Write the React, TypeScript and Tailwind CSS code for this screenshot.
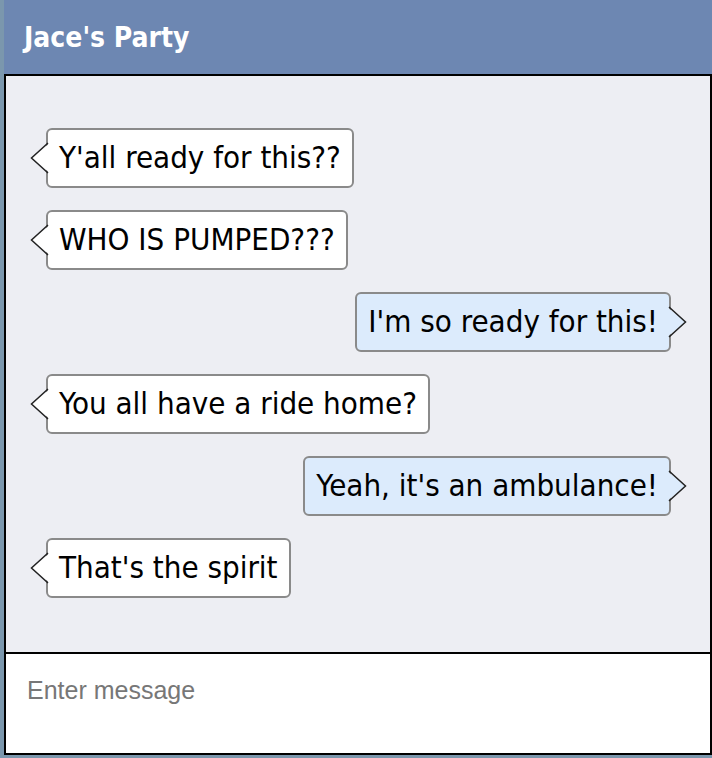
import React from 'react';

type Msg = { id: number; text: string; mine: boolean };

const messages: Msg[] = [
  { id: 1, text: "Y'all ready for this??", mine: false },
  { id: 2, text: 'WHO IS PUMPED???', mine: false },
  { id: 3, text: "I'm so ready for this!", mine: true },
  { id: 4, text: 'You all have a ride home?', mine: false },
  { id: 5, text: "Yeah, it's an ambulance!", mine: true },
  { id: 6, text: "That's the spirit", mine: false },
];

const Tail: React.FC<{ mine: boolean }> = ({ mine }) => (
  <svg
    width="20"
    height="32"
    viewBox="0 0 20 32"
    className={`absolute top-1/2 -translate-y-1/2 ${mine ? '-right-[18px] scale-x-[-1]' : '-left-[18px]'}`}
  >
    <polygon points="20,1 1.5,16 20,31" fill={mine ? '#dcebfc' : '#ffffff'} />
    <polyline points="18,1 1.5,16 18,31" fill="none" stroke="#222222" strokeWidth="1.5" />
  </svg>
);

const Bubble: React.FC<{ msg: Msg }> = ({ msg }) => (
  <div className={`flex ${msg.mine ? 'justify-end' : 'justify-start'}`}>
    <div
      className={`relative h-[60px] flex items-center px-[11px] pb-[2px] rounded-md border-2 border-[#8a8a8a] text-[31px] text-black ${
        msg.mine ? 'bg-[#dcebfc]' : 'bg-white'
      }`}
      style={{ fontFamily: '"DejaVu Sans Condensed", "DejaVu Sans", sans-serif' }}
    >
      <Tail mine={msg.mine} />
      <span className="relative">{msg.text}</span>
    </div>
  </div>
);

export default function App() {
  return (
    <div className="w-[712px] h-[758px] bg-[#7b97ad] pl-1 pb-[3px] overflow-hidden">
      <div className="flex flex-col h-full">
        <header className="h-[74px] bg-[#6d87b2] flex items-center px-5 pt-[2px] shrink-0">
          <h1
            className="text-white font-bold text-[28px]"
            style={{ fontFamily: '"DejaVu Sans Condensed", "DejaVu Sans", sans-serif' }}
          >
            Jace's Party
          </h1>
        </header>

        <div className="flex-1 flex flex-col border-2 border-black">
          <div className="flex-1 bg-[#edeef3] pt-[52px] pl-10 pr-[39px] flex flex-col gap-[22px]">
            {messages.map(m => (
              <Bubble key={m.id} msg={m} />
            ))}
          </div>
          <div className="h-[101px] bg-white border-t-2 border-black px-[21px] pt-[18px]">
            <input
              type="text"
              placeholder="Enter message"
              className="w-full outline-none text-[25px] placeholder:text-[#777777] bg-transparent"
              style={{ fontFamily: '"Liberation Sans", Arial, sans-serif' }}
            />
          </div>
        </div>
      </div>
    </div>
  );
}
